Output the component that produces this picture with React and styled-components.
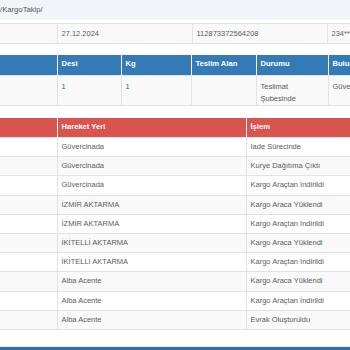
import React from "react";
import styled, { createGlobalStyle } from "styled-components";

const Global = createGlobalStyle`
  html, body { margin: 0; padding: 0; background: #fff; }
  body {
    width: 350px; height: 350px; overflow: hidden;
    font-family: "Liberation Sans", Arial, sans-serif;
    font-size: 7.5px; line-height: 12px; color: #5c5c5c;
  }
`;

const Page = styled.div`
  width: 350px; height: 350px; overflow: hidden;
  display: flex; flex-direction: column;
`;

const Breadcrumb = styled.div`
  height: 20px; background: #f1f4f8;
  display: flex; align-items: center;
  font-size: 7.7px; color: #555;
`;

const Table = styled.table`
  border-collapse: collapse; table-layout: fixed;
  width: ${(p) => p.$width}px;
  margin-top: ${(p) => p.$mt}px;
  flex-shrink: 0;
`;

const Th = styled.th`
  background: ${(p) => p.$bg};
  color: #fff; font-weight: bold; text-align: left;
  font-size: 7.6px;
  height: ${(p) => p.$h}px; padding: 0 4px 1px; box-sizing: border-box;
  border-left: 1px solid rgba(255,255,255,0.35);
  &:first-child { border-left: none; }
  vertical-align: middle; white-space: nowrap; overflow: hidden;
`;

const Td = styled.td`
  height: ${(p) => p.$h}px; box-sizing: border-box;
  padding: ${(p) => (p.$top ? "5px 4px 0" : "0 4px")};
  vertical-align: ${(p) => (p.$top ? "top" : "middle")};
  border-top: 1px solid #e2e2e2;
  border-left: 1px solid #e2e2e2;
  &:first-child { border-left: none; }
  white-space: ${(p) => (p.$wrap ? "normal" : "nowrap")};
  overflow: hidden;
`;

const Tr = styled.tr`
  background: ${(p) => (p.$striped ? "#f9f9f9" : "#fff")};
  &:last-child td { border-bottom: 1px solid #e2e2e2; }
`;

const Footer = styled.div`
  margin-top: auto; height: 3px; background: #2b6fae;
  border-top: 1px solid #dfe6ee;
`;

const moves = [
  ["Güvercinada", "İade Sürecinde"],
  ["Güvercinada", "Kurye Dağıtıma Çıktı"],
  ["Güvercinada", "Kargo Araçtan İndirildi"],
  ["İZMİR AKTARMA", "Kargo Araca Yüklendi"],
  ["İZMİR AKTARMA", "Kargo Araçtan İndirildi"],
  ["İKİTELLİ AKTARMA", "Kargo Araca Yüklendi"],
  ["İKİTELLİ AKTARMA", "Kargo Araçtan İndirildi"],
  ["Alba Acente", "Kargo Araca Yüklendi"],
  ["Alba Acente", "Kargo Araçtan İndirildi"],
  ["Alba Acente", "Evrak Oluşturuldu"],
];

const BLUE = "#337ab7";
const RED = "#d9534f";

export default function App() {
  return (
    <>
      <Global />
      <Page>
        <Breadcrumb>/KargoTakip/</Breadcrumb>

        <Table $width={462} $mt={3}>
          <colgroup>
            <col style={{ width: 57 }} />
            <col style={{ width: 135 }} />
            <col style={{ width: 135 }} />
            <col style={{ width: 135 }} />
          </colgroup>
          <tbody>
            <Tr $striped>
              <Td $h={20}></Td>
              <Td $h={20}>27.12.2024</Td>
              <Td $h={20}>112873372564208</Td>
              <Td $h={20}>234***</Td>
            </Tr>
          </tbody>
        </Table>

        <Table $width={428} $mt={11}>
          <colgroup>
            <col style={{ width: 57 }} />
            <col style={{ width: 64 }} />
            <col style={{ width: 70 }} />
            <col style={{ width: 65 }} />
            <col style={{ width: 72 }} />
            <col style={{ width: 100 }} />
          </colgroup>
          <thead>
            <tr>
              <Th $bg={BLUE} $h={20}></Th>
              <Th $bg={BLUE} $h={20}>Desi</Th>
              <Th $bg={BLUE} $h={20}>Kg</Th>
              <Th $bg={BLUE} $h={20}>Teslim Alan</Th>
              <Th $bg={BLUE} $h={20}>Durumu</Th>
              <Th $bg={BLUE} $h={20}>Bulunduğu Şube</Th>
            </tr>
          </thead>
          <tbody>
            <Tr $striped>
              <Td $h={30} $top></Td>
              <Td $h={30} $top>1</Td>
              <Td $h={30} $top>1</Td>
              <Td $h={30} $top></Td>
              <Td $h={30} $top $wrap>Teslimat Şubesinde</Td>
              <Td $h={30} $top>Güvercinada</Td>
            </Tr>
          </tbody>
        </Table>

        <Table $width={450} $mt={12}>
          <colgroup>
            <col style={{ width: 57 }} />
            <col style={{ width: 189 }} />
            <col style={{ width: 204 }} />
          </colgroup>
          <thead>
            <tr>
              <Th $bg={RED} $h={20}></Th>
              <Th $bg={RED} $h={20}>Hareket Yeri</Th>
              <Th $bg={RED} $h={20}>İşlem</Th>
            </tr>
          </thead>
          <tbody>
            {moves.map(([place, op], i) => (
              <Tr key={i} $striped={i % 2 === 1}>
                <Td $h={19.2}></Td>
                <Td $h={19.2}>{place}</Td>
                <Td $h={19.2}>{op}</Td>
              </Tr>
            ))}
          </tbody>
        </Table>

        <Footer />
      </Page>
    </>
  );
}
